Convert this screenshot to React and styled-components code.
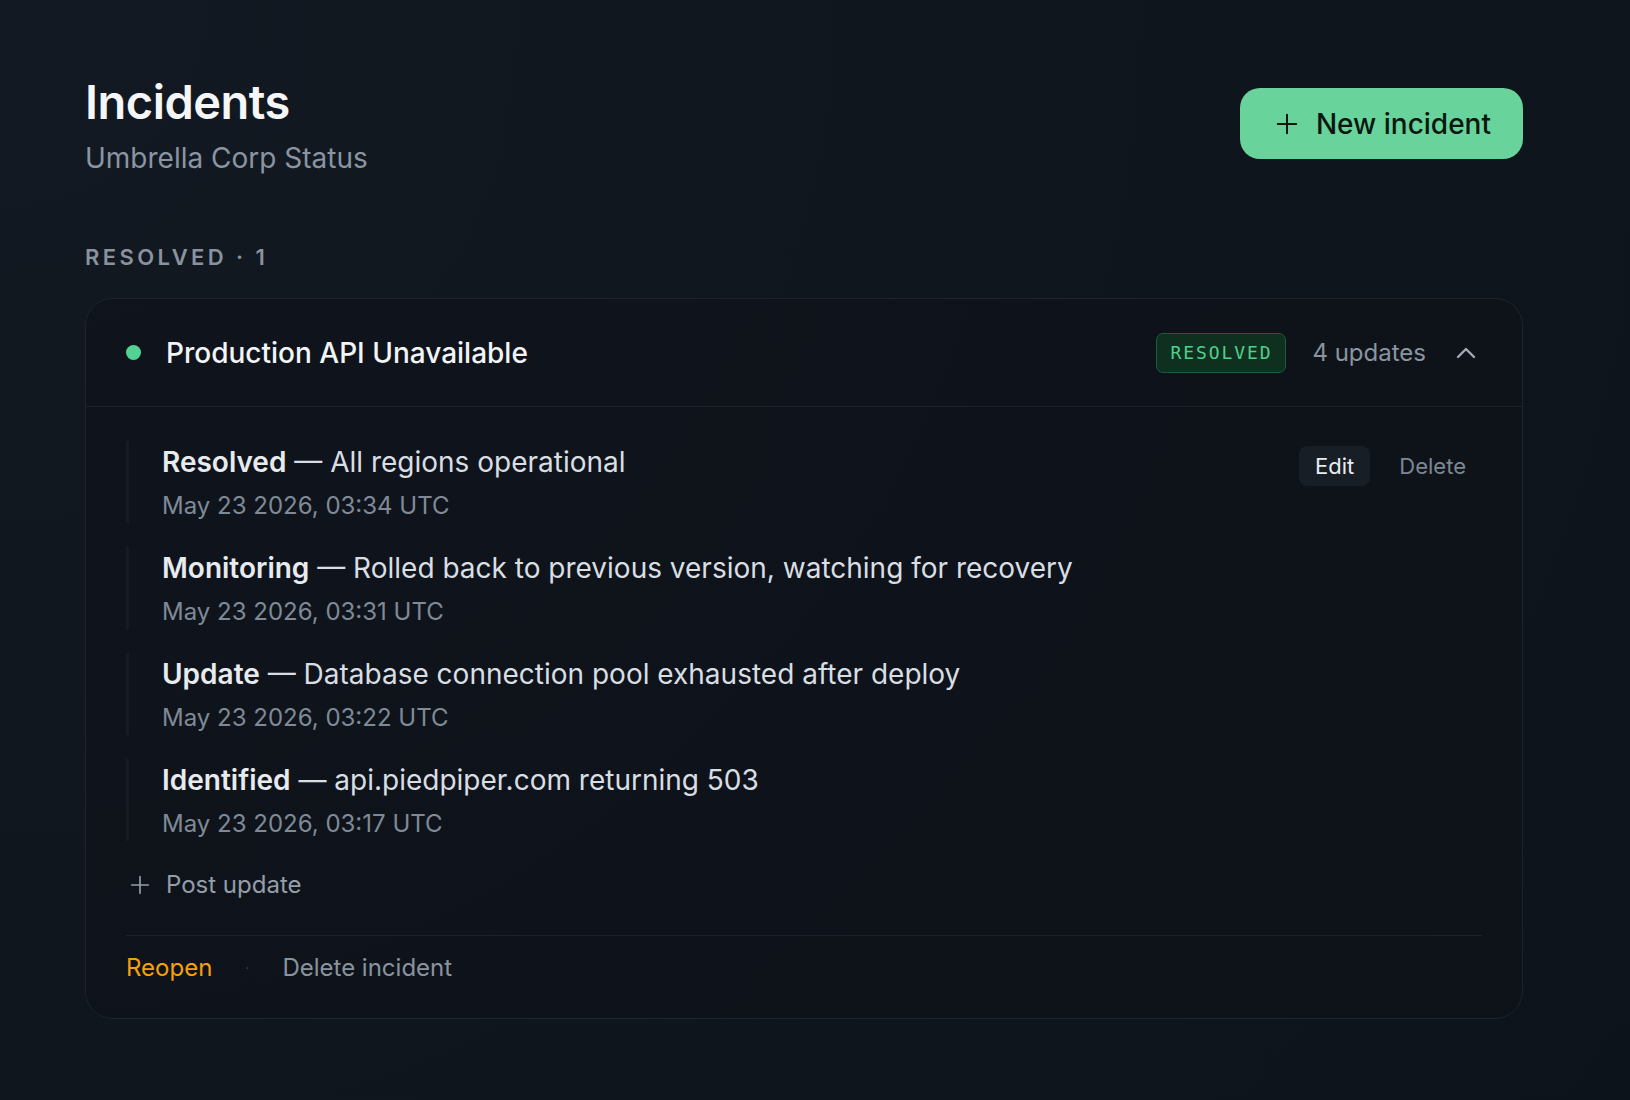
import React from 'react';
import styled, { createGlobalStyle } from 'styled-components';

const GlobalStyle = createGlobalStyle`
	* {
		box-sizing: border-box;
	}
	html,
	body {
		margin: 0;
		min-height: 100%;
	}
	body {
		min-height: 1100px;
		background: radial-gradient(circle at 0% 0%, #121922 0%, #0f161d 55%, #0d131a 100%);
		font-family: Inter, 'Noto Sans', sans-serif;
		color: #f3f5f7;
	}
`;

const updates = [
	{ kind: 'Resolved', text: 'All regions operational', time: 'May 23 2026, 03:34 UTC', actions: true },
	{ kind: 'Monitoring', text: 'Rolled back to previous version, watching for recovery', time: 'May 23 2026, 03:31 UTC' },
	{ kind: 'Update', text: 'Database connection pool exhausted after deploy', time: 'May 23 2026, 03:22 UTC' },
	{ kind: 'Identified', text: 'api.piedpiper.com returning 503', time: 'May 23 2026, 03:17 UTC' },
];

const PlusIcon = ({ size = 22, width = 2.2 }) => (
	<svg width={size} height={size} viewBox="0 0 24 24" fill="none" stroke="currentColor" strokeWidth={width} strokeLinecap="round">
		<path d="M12 2v20M2 12h20" />
	</svg>
);

const ChevronUp = () => (
	<svg width="20" height="12" viewBox="0 0 20 12" fill="none" stroke="currentColor" strokeWidth="2.4" strokeLinecap="round" strokeLinejoin="round">
		<path d="M2 10l8-8 8 8" />
	</svg>
);

const App = () => (
	<>
		<GlobalStyle />
		<Page>
			<Header>
				<div>
					<Title>Incidents</Title>
					<Subtitle>Umbrella Corp Status</Subtitle>
				</div>
				<NewButton>
					<PlusIcon />
					New incident
				</NewButton>
			</Header>

			<SectionLabel>RESOLVED · 1</SectionLabel>

			<Card>
				<CardHeader>
					<Dot />
					<CardTitle>Production API Unavailable</CardTitle>
					<Badge>RESOLVED</Badge>
					<UpdateCount>4 updates</UpdateCount>
					<Toggle>
						<ChevronUp />
					</Toggle>
				</CardHeader>

				<CardBody>
					<Timeline>
						{updates.map(u => (
							<Entry key={u.time}>
								<EntryText>
									<EntryTitle>
										<strong>{u.kind}</strong> — {u.text}
									</EntryTitle>
									<EntryTime>{u.time}</EntryTime>
								</EntryText>
								{u.actions && (
									<EntryActions>
										<SmallButton primary>Edit</SmallButton>
										<SmallButton>Delete</SmallButton>
									</EntryActions>
								)}
							</Entry>
						))}
					</Timeline>

					<PostUpdate>
						<PlusIcon size={20} width={2} />
						Post update
					</PostUpdate>

					<Footer>
						<FooterLink warn>Reopen</FooterLink>
						<Separator>·</Separator>
						<FooterLink>Delete incident</FooterLink>
					</Footer>
				</CardBody>
			</Card>
		</Page>
	</>
);

const Page = styled.main`
	width: 1438px;
	margin-left: 85px;
	padding-top: 74px;
`;

const Header = styled.header`
	display: flex;
	justify-content: space-between;
	align-items: flex-start;
`;

const Title = styled.h1`
	margin: 0;
	font-size: 47px;
	line-height: 56px;
	font-weight: 600;
	letter-spacing: -0.5px;
	color: #f4f6f8;
`;

const Subtitle = styled.p`
	margin: 10px 0 0;
	font-size: 28px;
	line-height: 36px;
	color: #8a95a1;
`;

const NewButton = styled.button`
	display: flex;
	align-items: center;
	gap: 18px;
	margin-top: 14px;
	height: 71px;
	padding: 0 32px 0 36px;
	border: none;
	border-radius: 20px;
	background: #68d39a;
	color: #0a1710;
	font-family: inherit;
	font-size: 28px;
	font-weight: 500;
	cursor: pointer;
`;

const SectionLabel = styled.h2`
	margin: 66px 0 0;
	font-size: 22px;
	line-height: 30px;
	font-weight: 600;
	letter-spacing: 3.4px;
	color: #8a939d;
`;

const Card = styled.section`
	margin-top: 26px;
	border: 1.5px solid #1d242c;
	border-radius: 28px;
	background: rgba(14, 19, 26, 0.55);
`;

const CardHeader = styled.div`
	display: flex;
	align-items: center;
	height: 108px;
	padding: 0 46px 0 40px;
	border-bottom: 1.5px solid #1b2229;
`;

const Dot = styled.span`
	width: 15px;
	height: 15px;
	border-radius: 50%;
	background: #52d394;
`;

const CardTitle = styled.h3`
	flex: 1;
	margin: 0 0 0 25px;
	font-size: 28px;
	font-weight: 500;
	color: #f2f4f6;
`;

const Badge = styled.span`
	display: inline-flex;
	align-items: center;
	height: 40px;
	padding: 0 13px 0 14px;
	border: 1.5px solid #1d5a3e;
	border-radius: 7px;
	background: #10301f;
	color: #4fcf8d;
	font-family: 'DejaVu Sans Mono', 'Liberation Mono', monospace;
	font-size: 18px;
	letter-spacing: 1.9px;
`;

const UpdateCount = styled.span`
	margin-left: 26px;
	font-size: 24px;
	color: #8b95a0;
`;

const Toggle = styled.button`
	display: flex;
	align-items: center;
	justify-content: center;
	margin-left: 30px;
	padding: 6px 0;
	border: none;
	background: none;
	color: #a3abb5;
	cursor: pointer;
`;

const CardBody = styled.div`
	padding: 34px 40px 33px 40px;
`;

const Timeline = styled.ul`
	display: flex;
	flex-direction: column;
	gap: 24px;
	margin: 0;
	padding: 0;
	list-style: none;
`;

const Entry = styled.li`
	display: flex;
	justify-content: space-between;
	align-items: flex-start;
	min-height: 82px;
	padding: 2px 0 0 33px;
	border-left: 3px solid #161c23;
`;

const EntryText = styled.div`
	display: flex;
	flex-direction: column;
`;

const EntryTitle = styled.p`
	margin: 0;
	font-size: 28px;
	line-height: 38px;
	color: #d9dee3;
	strong {
		font-weight: 600;
		color: #e8ebee;
	}
`;

const EntryTime = styled.span`
	margin-top: 9px;
	font-size: 24px;
	line-height: 32px;
	color: #7f8a96;
`;

const EntryActions = styled.div`
	display: flex;
	align-items: center;
	gap: 13px;
	padding-top: 3px;
`;

const SmallButton = styled.button`
	height: 40px;
	padding: 0 16px;
	border: none;
	border-radius: 8px;
	background: ${props => (props.primary ? '#171e26' : 'transparent')};
	color: ${props => (props.primary ? '#e9ecef' : '#7d8792')};
	font-family: inherit;
	font-size: 22px;
	cursor: pointer;
`;

const PostUpdate = styled.button`
	display: flex;
	align-items: center;
	gap: 16px;
	margin-top: 27px;
	padding: 0 0 0 4px;
	border: none;
	background: none;
	color: #949ea9;
	font-family: inherit;
	font-size: 24px;
	line-height: 34px;
	cursor: pointer;
`;

const Footer = styled.div`
	display: flex;
	align-items: center;
	margin-top: 33px;
	padding-top: 15px;
	border-top: 1.5px solid #1b2229;
	line-height: 34px;
`;

const FooterLink = styled.span`
	font-size: 24px;
	color: ${props => (props.warn ? '#f5a00f' : '#8a939d')};
	cursor: pointer;
`;

const Separator = styled.span`
	margin: 0 33px;
	font-size: 14px;
	color: #3a434c;
`;

export default App;
